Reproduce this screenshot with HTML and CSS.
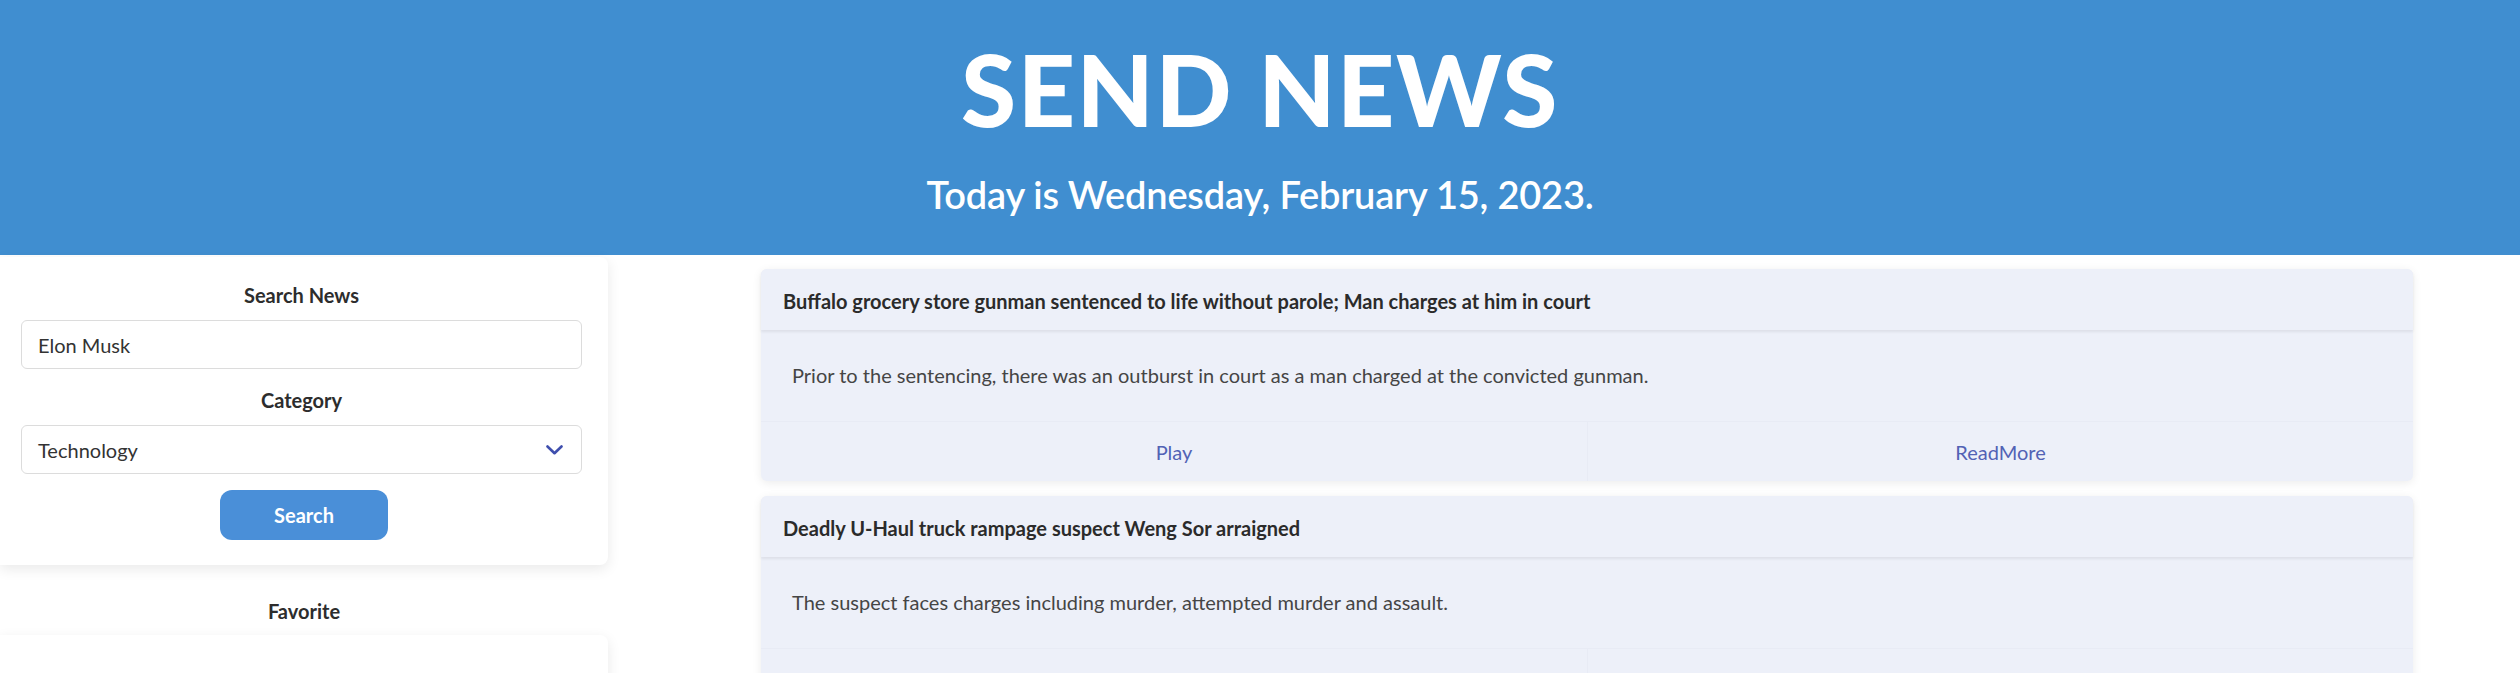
FILE: index.html
```html
<!DOCTYPE html>
<html lang="en">
<head>
<meta charset="utf-8">
<title>Send News</title>
<link rel="stylesheet" href="styles.css">
</head>
<body>
<header class="hero">
  <h1 class="hero-title">SEND NEWS</h1>
  <p class="hero-date">Today is Wednesday, February 15, 2023.</p>
</header>
<div class="layout">
  <aside class="sidebar">
    <div class="panel search-panel">
      <div class="label">Search News</div>
      <input class="field" type="text" value="Elon Musk">
      <div class="label label-gap">Category</div>
      <div class="field select">
        <span>Technology</span>
        <svg class="chevron" width="17" height="10" viewBox="0 0 17 10"><polyline points="1.5,1.5 8.5,8.2 15.5,1.5" fill="none" stroke="#3f4fae" stroke-width="2.6" stroke-linecap="round" stroke-linejoin="round"/></svg>
      </div>
      <div class="btn-row"><button class="btn">Search</button></div>
    </div>
    <div class="label fav-label">Favorite</div>
    <div class="panel fav-panel"></div>
  </aside>
  <main class="feed">
    <article class="card">
      <div class="card-head">Buffalo grocery store gunman sentenced to life without parole; Man charges at him in court</div>
      <div class="card-body">Prior to the sentencing, there was an outburst in court as a man charged at the convicted gunman.</div>
      <div class="card-foot"><a class="act">Play</a><a class="act">ReadMore</a></div>
    </article>
    <article class="card">
      <div class="card-head">Deadly U-Haul truck rampage suspect Weng Sor arraigned</div>
      <div class="card-body">The suspect faces charges including murder, attempted murder and assault.</div>
      <div class="card-foot"><a class="act">Play</a><a class="act">ReadMore</a></div>
    </article>
  </main>
</div>
</body>
</html>
```
FILE: styles.css
```css
* { box-sizing: border-box; }
html, body { margin: 0; padding: 0; }
body {
  font-family: "Lato", "Liberation Sans", sans-serif;
  color: #2d2d2d;
  background: #fff;
  overflow: hidden;
}
.hero {
  height: 255px;
  background: #408ed0;
  color: #fff;
  text-align: center;
  padding-top: 38px;
}
.hero-title {
  margin: 0;
  font-size: 100px;
  line-height: 100px;
  font-weight: 900;
  letter-spacing: 1.5px;
}
.hero-date {
  margin: 33px 0 0;
  font-size: 38px;
  line-height: 46px;
  font-weight: 600;
  letter-spacing: -0.2px;
}
.layout {
  display: grid;
  grid-template-columns: 608px 1fr;
}
.sidebar { padding-top: 2px; }
.panel {
  background: #fff;
  border-radius: 0 8px 8px 0;
  box-shadow: 0 4px 14px rgba(0,0,0,0.09);
}
.search-panel {
  padding: 26px 26px 25px 21px;
  display: flex;
  flex-direction: column;
}
.label {
  text-align: center;
  font-weight: 700;
  font-size: 20px;
  line-height: 24px;
  color: #2d2d2d;
  margin-bottom: 13px;
}
.label-gap { margin-top: 19px; }
.field {
  height: 49px;
  border: 1px solid #dcdcdc;
  border-radius: 6px;
  padding: 0 18px 0 16px;
  font-family: inherit;
  font-size: 20px;
  color: #333;
  background: #fff;
  width: 100%;
  outline: none;
}
.select {
  display: flex;
  align-items: center;
  justify-content: space-between;
}
.btn-row {
  display: flex;
  justify-content: center;
  margin-top: 16px;
  padding-left: 5px;
}
.btn {
  width: 168px;
  height: 50px;
  border: 0;
  border-radius: 12px;
  background: #4a8fd8;
  color: #fff;
  font-family: inherit;
  font-weight: 700;
  font-size: 20px;
}
.fav-label {
  margin-top: 34px;
  margin-bottom: 12px;
}
.fav-panel { height: 140px; }
.feed {
  padding: 14px 107px 0 153px;
  display: flex;
  flex-direction: column;
  gap: 15px;
}
.card {
  background: #edf0f9;
  border-radius: 6px;
  box-shadow: 0 2px 10px rgba(0,0,0,0.08);
}
.card-head {
  position: relative;
  padding: 20px 22px 17px;
  font-size: 20px;
  line-height: 24px;
  font-weight: 700;
  color: #2b2b2b;
  border-radius: 6px 6px 0 0;
  background: #edf0f9;
  box-shadow: 0 2px 3px rgba(0,0,0,0.07);
}
.card-body {
  padding: 33px 31px 34px;
  font-size: 20px;
  line-height: 24px;
  color: #454545;
}
.card-foot {
  display: grid;
  grid-template-columns: 1fr 1fr;
  border-top: 1px solid #e8ebf5;
}
.act {
  text-align: center;
  padding: 18px 0 17px;
  font-size: 20px;
  line-height: 24px;
  color: #5262b5;
}
.act + .act { border-left: 1px solid #e8ebf5; }
```
